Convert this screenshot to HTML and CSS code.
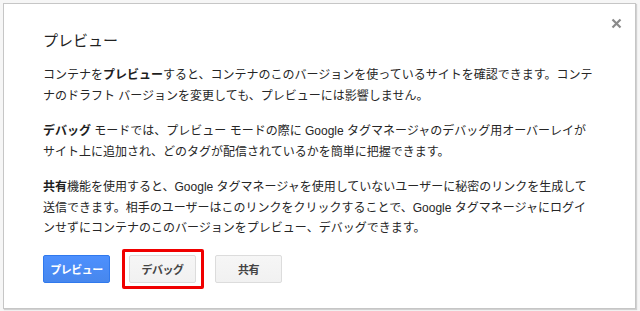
FILE: index.html
```html
<!DOCTYPE html>
<html lang="ja">
<head>
<meta charset="utf-8">
<link rel="stylesheet" href="styles.css">
</head>
<body>
<div class="dialog">
  <div class="close" aria-label="閉じる">
    <svg width="11" height="11" viewBox="0 0 11 11"><path d="M1.5 1.5 L9.5 9.5 M9.5 1.5 L1.5 9.5" stroke="#8a8a8a" stroke-width="2.2" fill="none"/></svg>
  </div>
  <h1 class="title">プレビュー</h1>
  <p class="para">コンテナを<b>プレビュー</b>すると、コンテナのこのバージョンを使っているサイトを確認できます。コンテ<br>ナのドラフト バージョンを変更しても、プレビューには影響しません。</p>
  <p class="para"><b>デバッグ</b> モードでは、プレビュー モードの際に Google タグマネージャのデバッグ用オーバーレイが<br>サイト上に追加され、どのタグが配信されているかを簡単に把握できます。</p>
  <p class="para"><b>共有</b>機能を使用すると、Google タグマネージャを使用していないユーザーに秘密のリンクを生成して<br>送信できます。相手のユーザーはこのリンクをクリックすることで、Google タグマネージャにログイ<br>ンせずにコンテナのこのバージョンをプレビュー、デバッグできます。</p>
  <div class="buttons">
    <button class="btn btn-primary">プレビュー</button>
    <div class="highlight"><button class="btn">デバッグ</button></div>
    <button class="btn">共有</button>
  </div>
</div>
</body>
</html>
```

FILE: styles.css
```css
html, body {
  margin: 0;
  padding: 0;
}
body {
  background: #f6f6f6;
  padding: 3px 0 0 3px;
  width: 640px;
  height: 311px;
  box-sizing: border-box;
  font-family: "Liberation Sans", "Noto Sans CJK JP", sans-serif;
  color: #333;
  overflow: hidden;
}
.dialog {
  position: relative;
  width: 633px;
  height: 306px;
  box-sizing: border-box;
  background: #fff;
  border: 1px solid #c6c6c6;
  box-shadow: 1px 1px 1px rgba(0,0,0,0.15);
  padding: 27px 0 0 39px;
}
.close {
  position: absolute;
  top: 14px;
  right: 13px;
  width: 11px;
  height: 11px;
}
.close svg { display: block; }
.title {
  margin: 0;
  font-size: 15px;
  line-height: 20px;
  font-weight: normal;
  color: #222;
}
.para {
  margin: 14px 0 0;
  font-size: 12px;
  line-height: 20.5px;
  white-space: nowrap;
  color: #262626;
}
.para + .para {
  margin-top: 15px;
}
.para b {
  font-weight: bold;
  color: #1e1e1e;
}
.buttons {
  display: flex;
  align-items: center;
  margin-top: 10px;
}
.btn {
  width: 67px;
  height: 28px;
  box-sizing: border-box;
  border-radius: 2px;
  border: 1px solid #dcdcdc;
  background: linear-gradient(#f6f6f6, #f1f1f1);
  color: #444;
  font-family: "Liberation Sans", "Noto Sans CJK JP", sans-serif;
  font-size: 11px;
  font-weight: bold;
  padding: 0;
  letter-spacing: -0.5px;
}
.btn-primary {
  background: linear-gradient(#4d90fe, #4787ed);
  border-color: #3079ed;
  color: #fff;
}
.highlight {
  margin-left: 12px;
  margin-right: 11px;
  border: 3px solid #f00000;
  border-radius: 2px;
  padding: 3px 5px 3px 4px;
  display: flex;
}
```
